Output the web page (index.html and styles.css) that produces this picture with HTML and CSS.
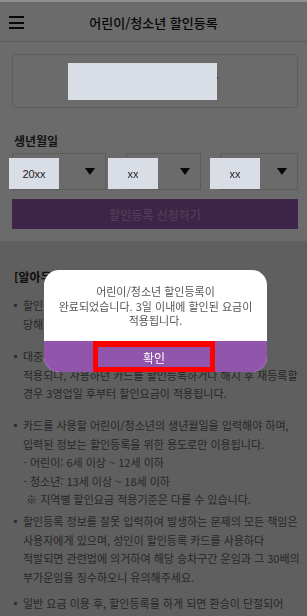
FILE: index.html
```html
<!DOCTYPE html>
<html lang="ko">
<head>
    <meta charset="UTF-8">
    <meta name="viewport" content="width=device-width, initial-scale=1.0">
    <title>어린이/청소년 할인등록</title>
    <link rel="stylesheet" href="styles.css">
</head>
<body>
    <div class="topline"></div>
    <div class="header">
        <span class="menu"><i></i><i></i><i></i></span>
        <h1>어린이/청소년 할인등록</h1>
    </div>

    <div class="form-area">
        <div class="card-box">
            <span class="card-no">1234 5678 9012 3457</span>
            <span class="mask mask-card"></span>
        </div>

        <label class="field-label">생년월일</label>
        <div class="birth-row">
            <div class="select sel-year"><span class="arrow"></span></div>
            <div class="select sel-month"><span class="arrow"></span></div>
            <div class="select sel-day"><span class="arrow"></span></div>
            <span class="mask mask-year">20xx</span>
            <span class="mask mask-month">xx</span>
            <span class="mask mask-day">xx</span>
        </div>

        <button class="apply-btn">할인등록 신청하기</button>
    </div>

    <div class="notice">
        <h2>[알아두세요]</h2>
        <ul>
            <li>할인등록은 만 19세가 되는 해 1월 1일 해지되어<br>당해 연도부터 일반요금이 적용됩니다.</li>
            <li>대중교통 이용 시 할인요금은 등록 다음날부터<br>적용되나, 사용하던 카드를 할인등록하거나 해지 후 재등록할<br>경우 3영업일 후부터 할인요금이 적용됩니다.</li>
            <li>카드를 사용할 어린이/청소년의 생년월일을 입력해야 하며,<br>입력된 정보는 할인등록을 위한 용도로만 이용됩니다.<br>- 어린이: 6세 이상 ~ 12세 이하<br>- 청소년: 13세 이상 ~ 18세 이하<br>&nbsp;※ 지역별 할인요금 적용기준은 다를 수 있습니다.</li>
            <li>할인등록 정보를 잘못 입력하여 발생하는 문제의 모든 책임은<br>사용자에게 있으며, 성인이 할인등록 카드를 사용하다<br>적발되면 관련법에 의거하여 해당 승차구간 운임과 그 30배의<br>부가운임을 징수하오니 유의해주세요.</li>
            <li>일반 요금 이용 후, 할인등록을 하게 되면 환승이 단절되어<br>추가 요금이 부과될 수 있습니다.</li>
        </ul>
    </div>

    <div class="dim"></div>

    <div class="modal">
        <p class="modal-text">어린이/청소년 할인등록이<br>완료되었습니다. 3일 이내에 할인된 요금이<br>적용됩니다.</p>
        <div class="modal-foot">
            <span class="ok-btn">확인</span>
        </div>
    </div>
</body>
</html>
```

FILE: styles.css
```css
body {
    font-family: "Noto Sans CJK KR", "Noto Sans", sans-serif;
    margin: 0;
    background-color: #e2e2e2;
    width: 307px;
    height: 616px;
    overflow: hidden;
    color: #222;
}
.topline {
    height: 2px;
    background: #8f8f8f;
    position: relative;
    z-index: 20;
}
.header {
    height: 39px;
    background: #ffffff;
    border-bottom: 1px solid #dcdcdc;
    display: flex;
    align-items: center;
    justify-content: center;
    position: relative;
}
.menu {
    position: absolute;
    left: 9px;
    top: 14px;
    width: 15px;
    display: flex;
    flex-direction: column;
    gap: 3.5px;
}
.menu i {
    display: block;
    height: 2px;
    background: #111;
}
.header h1 {
    font-size: 13px;
    font-weight: 500;
    margin: 2px 0 0 0;
    color: #111;
}
.form-area {
    background: #ffffff;
    padding: 12px 9px 12px 12px;
}
.card-box {
    height: 52px;
    border: 1px solid #dedede;
    border-radius: 4px;
    display: flex;
    align-items: center;
    justify-content: center;
    position: relative;
}
.card-no {
    font-size: 13px;
    color: #444;
    font-family: "Liberation Sans", sans-serif;
}
.mask {
    position: absolute;
    z-index: 20;
    background: #d9dde6;
    color: #222;
    font-family: "Liberation Sans", sans-serif;
    font-size: 11px;
    display: flex;
    align-items: center;
    justify-content: center;
}
.mask-card {
    left: 55px;
    top: 8px;
    width: 149px;
    height: 37px;
}
.field-label {
    display: block;
    font-size: 12px;
    font-weight: 700;
    color: #333;
    margin: 24px 0 0 2px;
    line-height: 17px;
}
.birth-row {
    display: flex;
    gap: 20px;
    margin-top: 4px;
    position: relative;
}
.select {
    height: 35px;
    border: 1px solid #dcdcdc;
    display: flex;
    align-items: center;
    justify-content: flex-end;
    padding-right: 10px;
}
.sel-year { width: 82px; }
.sel-month { width: 64px; }
.sel-day { width: 66px; margin-left: -1px; }
.arrow {
    width: 0;
    height: 0;
    border-left: 5.5px solid transparent;
    border-right: 5.5px solid transparent;
    border-top: 7px solid #111;
}
.mask-year { left: -3px; top: 5px; width: 50px; height: 31px; }
.mask-month { left: 96px; top: 5px; width: 50px; height: 31px; }
.mask-day { left: 198px; top: 5px; width: 50px; height: 31px; }
.apply-btn {
    display: block;
    width: 100%;
    height: 30px;
    margin-top: 9px;
    border: none;
    background: #9456ab;
    color: rgba(255, 255, 255, 0.38);
    font-family: inherit;
    font-size: 12px;
    font-weight: 500;
}
.notice {
    padding: 27px 12px 0 14px;
}
.notice h2 {
    font-size: 12px;
    font-weight: 700;
    margin: 0 0 10px 0;
    color: #222;
    line-height: 18px;
}
.notice ul {
    list-style: none;
    margin: 0;
    padding: 0;
}
.notice li {
    position: relative;
    padding-left: 9px;
    font-size: 11px;
    line-height: 18.5px;
    color: #5e5e5e;
    margin-bottom: 14px;
    white-space: nowrap;
}
.notice li:nth-child(2) { margin-bottom: 13.5px; }
.notice li:nth-child(3) { margin-bottom: 3.5px; }
.notice li:nth-child(4) { margin-bottom: 8px; }
.notice li::before {
    content: "";
    position: absolute;
    left: 0;
    top: 8px;
    width: 3px;
    height: 3px;
    background: #9456ab;
}
.dim {
    position: fixed;
    left: 0;
    top: 0;
    right: 0;
    bottom: 0;
    background: rgba(0, 0, 0, 0.58);
    z-index: 10;
}
.modal {
    position: fixed;
    left: 44px;
    top: 270px;
    width: 223px;
    z-index: 30;
    background: #ffffff;
    border-radius: 15px;
    overflow: hidden;
}
.modal-text {
    margin: 0;
    height: 71px;
    padding-top: 14px;
    box-sizing: border-box;
    font-size: 11px;
    line-height: 14.5px;
    color: #555;
    text-align: center;
}
.modal-foot {
    height: 31px;
    background: #9155ab;
    display: flex;
    justify-content: center;
}
.ok-btn {
    width: 122px;
    box-sizing: border-box;
    border: 5px solid #ff0000;
    border-top-width: 6px;
    margin-right: 3px;
    color: #ffffff;
    font-size: 12px;
    display: flex;
    align-items: center;
    justify-content: center;
}
```
